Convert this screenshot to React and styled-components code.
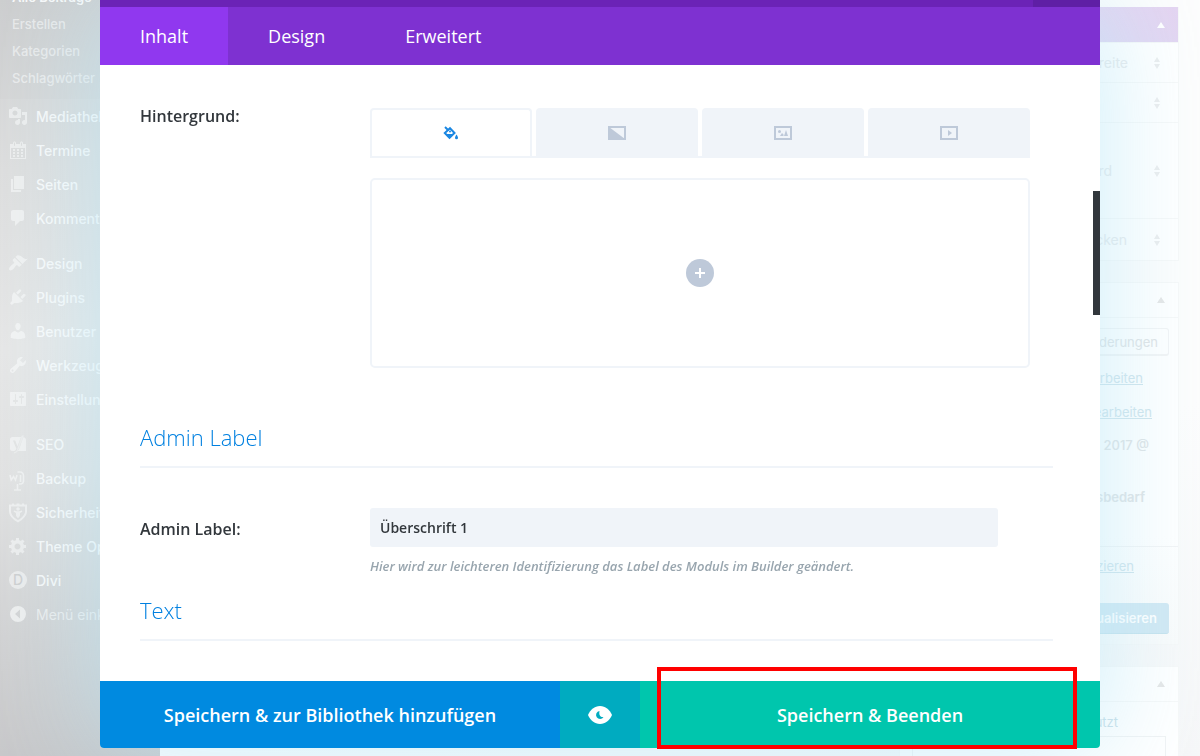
import React from "react";
import styled, { createGlobalStyle, css } from "styled-components";

const ui = `Inter, "Liberation Sans", sans-serif`;
const brand = `"Open Sans", "Noto Sans", sans-serif`;

const GlobalStyle = createGlobalStyle`
  *, *::before, *::after { box-sizing: border-box; }
  body { margin: 0; background: #fdfdfd; overflow: hidden; }
  button, input { font: inherit; color: inherit; border: 0; margin: 0; padding: 0; background: none; }
  button { cursor: pointer; }
  a { color: inherit; text-decoration: none; }
  h2 { margin: 0; font: inherit; }
`;

/* ---------- admin page behind the dialog ---------- */

const Page = styled.div`
  display: flex;
  justify-content: space-between;
  height: 100vh;
  overflow: hidden;
  font-family: ${ui};
  font-size: 14px;
  background: linear-gradient(160deg, #fdfdfd 70%, #f6f7f8);
`;

const Sidebar = styled.nav`
  width: 160px;
  flex: none;
  color: rgba(255, 255, 255, 0.85);
  background: linear-gradient(172deg, #d0d1d2 0%, #dedede 22%, #e7e7e7 45%, #e2e2e2 62%, #d2d2d3 82%, #c6c6c8 100%);
`;

const SubMenu = styled.div`
  margin-top: -16px;
  padding-bottom: 7px;
  background: rgba(0, 0, 0, 0.01);
`;

const SubLink = styled.a`
  display: block;
  padding-left: 12px;
  font-size: 13px;
  font-weight: ${(p) => (p.$current ? 600 : 500)};
  line-height: 27px;
  color: ${(p) => (p.$current ? "rgba(255,255,255,.9)" : "rgba(255,255,255,.55)")};
`;

const MenuGroup = styled.div`
  margin-bottom: 11px;
`;

const MenuLink = styled.a`
  display: flex;
  align-items: center;
  gap: 8px;
  height: 34px;
  padding-left: 8px;
  font-weight: ${(p) => (p.$muted ? 400 : 500)};
  white-space: nowrap;
  opacity: ${(p) => (p.$muted ? 0.7 : 1)};

  svg {
    flex: none;
    opacity: ${(p) => (p.$muted ? 1 : 0.6)};
  }
`;

const Aside = styled.aside`
  display: flex;
  flex-direction: column;
  gap: 21px;
  width: 280px;
  flex: none;
  margin: 7px 21px 0 0;
  color: #e0e3e5;
`;

const Panel = styled.section`
  flex: none;
  border: 1px solid #f7f8f8;
  border-top-width: ${(p) => (p.$flush ? 0 : "1px")};
  background: ${(p) => (p.$shaded ? "linear-gradient(#fff 70%, #fafbfb)" : "#fff")};
`;

const PanelHead = styled.header`
  display: flex;
  align-items: center;
  justify-content: flex-end;
  height: ${(p) => (p.$accent ? 36 : 35)}px;
  padding-right: 12px;
  border-bottom: 1px solid #f7f8f8;
  color: ${(p) => (p.$accent ? "#fff" : "#e6e6e6")};
  background: ${(p) => (p.$accent ? "linear-gradient(20deg, #dcdaf4, #e5d4f1)" : "none")};
`;

const Setting = styled.div`
  display: flex;
  align-items: center;
  justify-content: space-between;
  height: ${(p) => p.$height}px;
  padding: 0 17px;
  border-bottom: 1px solid #f7f8f8;
  color: #e8eaec;

  &:last-child { border-bottom: 0; }
`;

const SettingValue = styled.span`
  flex: 1;
  padding-right: ${(p) => p.$gap}px;
  text-align: right;
`;

const Meta = styled.div`
  display: flex;
  flex-direction: column;
  align-items: flex-end;
  padding: 10px 9px 0;
  height: 228px;
  font-size: 13px;
`;

const MetaLine = styled.div`
  margin-top: ${(p) => p.$space}px;
  padding-right: ${(p) => p.$gap}px;
  line-height: 20px;
  font-weight: ${(p) => (p.$bold ? 600 : 500)};
`;

const MetaLink = styled.a`
  color: #d0e4ec;
  font-weight: 400;
  text-decoration: underline;
`;

const PreviewButton = styled.button`
  height: 28px;
  padding: 0 10px;
  border: 1px solid #f3f4f5;
  border-bottom-width: 2px;
  border-radius: 3px;
`;

const PublishBar = styled.footer`
  display: flex;
  flex-direction: column;
  align-items: flex-end;
  gap: 27px;
  height: 98px;
  padding: 9px 9px 0;
  border-top: 1px solid #f3f4f5;
  font-size: 13px;
`;

const PublishButton = styled.button`
  height: 31px;
  padding: 0 12px;
  border-radius: 3px;
  border-bottom: 1px solid #c5e2ed;
  font-weight: 600;
  color: #fff;
  background: #d1e8f3;
`;

const Used = styled.div`
  padding: 10px 12px 0;
  font-size: 13px;
  line-height: 20px;
  text-align: right;
  color: #c9dfe9;
`;

const UsedLabel = styled.a`
  margin-right: 48px;
`;

const UsedBox = styled.div`
  height: 60px;
  margin-top: 4px;
  border: 1px solid #f1f3f4;
`;

/* ---------- module settings dialog ---------- */

const Dialog = styled.div`
  position: fixed;
  inset: 0 100px 8px;
  display: flex;
  flex-direction: column;
  border-radius: 0 0 4px 4px;
  background: #fff;
  box-shadow: 0 0 110px rgba(183, 230, 247, 0.72);
  font-family: ${brand};
  color: #32373c;
`;

const TitleBar = styled.div`
  display: flex;
  justify-content: flex-end;
  flex: none;
  height: 7px;
  background: #6b23b6;
`;

const TitleAction = styled.button`
  width: 67px;
  background: #5f1fa5;
`;

const TabBar = styled.div`
  display: flex;
  flex: none;
  background: #7e31d1;
`;

const Tab = styled.button`
  height: 58px;
  padding: 0 40px;
  font-size: 18px;
  font-weight: 500;
  color: #fff;
  background: ${(p) => (p.$active ? "#9038ef" : "none")};
`;

const Body = styled.div`
  position: relative;
  flex: 1;
  min-height: 0;
  overflow: hidden;
  padding: 43px 47px 0 40px;
`;

const ScrollThumb = styled.div`
  position: absolute;
  top: 126px;
  right: 0;
  width: 7px;
  height: 124px;
  background: #32373c;
`;

const Field = styled.div`
  display: grid;
  grid-template-columns: 230px 1fr;
`;

const label = css`
  font-size: 16px;
  font-weight: 600;
  line-height: 16px;
`;

const FieldTitle = styled.div`
  ${label}
`;

const FieldLabel = styled.label`
  ${label}
  padding-top: 13px;
`;

const BackgroundPicker = styled.div`
  padding-right: 23px;
`;

const KindTabs = styled.div`
  display: flex;
  gap: 4px;
  height: 50px;
  border-bottom: 2px solid #f0f4f9;
`;

const KindTab = styled.button`
  flex: 1;
  display: flex;
  align-items: center;
  justify-content: center;
  border-radius: 4px 4px 0 0;
  color: ${(p) => (p.$active ? "#1b87e2" : "#bec9d9")};
  background: ${(p) => (p.$active ? "#fff" : "#f0f4f9")};
  border: 2px solid #f0f4f9;
  border-bottom: 0;
`;

const ColorArea = styled.div`
  display: flex;
  align-items: center;
  justify-content: center;
  height: 190px;
  margin-top: 20px;
  border: 2px solid #f0f4f9;
  border-radius: 5px;
`;

const AddButton = styled.button`
  display: flex;
  align-items: center;
  justify-content: center;
  width: 28px;
  height: 28px;
  border-radius: 50%;
  color: #fff;
  background: #bec9d9;
`;

const SectionTitle = styled.h2`
  margin-top: ${(p) => p.$space}px;
  padding-bottom: 14px;
  border-bottom: 2px solid #f0f4f9;
  font-size: 22px;
  font-weight: 300;
  line-height: 30px;
  color: #0080e0;
`;

const LabelField = styled(Field)`
  margin-top: 40px;
`;

const TextInput = styled.input`
  display: block;
  width: calc(100% - 55px);
  height: 39px;
  padding: 0 10px;
  border-radius: 3px;
  font-size: 14px;
  font-weight: 600;
  background: #f0f4f9;
  outline: 0;
`;

const Help = styled.p`
  margin: 9px 0 0;
  font-size: 13px;
  font-style: italic;
  font-weight: 600;
  line-height: 20px;
  color: #98a5ae;
`;

const Footer = styled.div`
  display: flex;
  flex: none;
  height: 67px;
`;

const FooterButton = styled.button`
  position: relative;
  display: flex;
  align-items: center;
  justify-content: center;
  flex: ${(p) => (p.$icon ? "0 0 80px" : "1")};
  font-size: 18px;
  font-weight: 600;
  color: #fff;
  background: ${(p) => p.$color};
  border-radius: ${(p) => p.$radius || 0};
`;

const Highlight = styled.span`
  position: absolute;
  inset: -14px 23px -1px 17px;
  border: 4px solid #ff0000;
  pointer-events: none;
`;

/* ---------- icons ---------- */

const glyphs = {
  media: "M13 11V4c0-.55-.45-1-1-1h-1.67L9 1H5L3.67 3H2c-.55 0-1 .45-1 1v7c0 .55.45 1 1 1h10c.55 0 1-.45 1-1zM7 4.5c1.38 0 2.5 1.12 2.5 2.5S8.38 9.5 7 9.5 4.5 8.38 4.5 7 5.62 4.5 7 4.5zM14 6h5v10.5c0 1.38-1.12 2.5-2.5 2.5S14 17.88 14 16.5s1.12-2.5 2.5-2.5c.17 0 .34.02.5.05V9h-3V6zm-4 8.05V13h2v3.5c0 1.38-1.12 2.5-2.5 2.5S7 17.88 7 16.5 8.12 14 9.5 14c.17 0 .34.02.5.05z",
  calendar: "M15 4h3v15H2V4h3V3c0-.41.15-.76.44-1.06.29-.29.65-.44 1.06-.44s.77.15 1.06.44c.29.3.44.65.44 1.06v1h4V3c0-.41.15-.76.44-1.06.29-.29.65-.44 1.06-.44s.77.15 1.06.44c.29.3.44.65.44 1.06v1zM6 3v2.5c0 .14.05.26.15.36.09.09.21.14.35.14s.26-.05.35-.14c.1-.1.15-.22.15-.36V3c0-.14-.05-.26-.15-.35-.09-.1-.21-.15-.35-.15s-.26.05-.35.15c-.1.09-.15.21-.15.35zm7 0v2.5c0 .14.05.26.14.36.1.09.22.14.36.14s.26-.05.36-.14c.09-.1.14-.22.14-.36V3c0-.14-.05-.26-.14-.35-.1-.1-.22-.15-.36-.15s-.26.05-.36.15c-.09.09-.14.21-.14.35zm4 15V8H3v10h14zM7 9v2H5V9h2zm2 0h2v2H9V9zm4 2V9h2v2h-2zm-6 1v2H5v-2h2zm2 0h2v2H9v-2zm4 2v-2h2v2h-2zm-6 1v2H5v-2h2zm4 2H9v-2h2v2zm4 0h-2v-2h2v2z",
  pages: "M6 15V2h10v13H6zm-1 1h8v2H3V5h2v11z",
  comments: "M5 2h9c1.1 0 2 .9 2 2v7c0 1.1-.9 2-2 2h-2l-5 5v-5H5c-1.1 0-2-.9-2-2V4c0-1.1.9-2 2-2z",
  design: "M14.48 11.06L7.41 3.99l1.5-1.5c.5-.56 2.3-.47 3.51.32 1.21.8 1.43 1.28 2.91 2.1 1.18.64 2.45 1.26 4.45.85zm-.71.71L6.7 4.7 4.93 6.47c-.39.39-.39 1.02 0 1.41l1.06 1.06c.39.39.39 1.03 0 1.42-.6.6-1.43 1.11-2.21 1.69-.35.26-.7.53-1.01.84C1.43 14.23.4 16.08 1.4 17.07c.99 1 2.84-.03 4.18-1.36.31-.31.58-.66.85-1.02.57-.78 1.08-1.61 1.69-2.21.39-.39 1.02-.39 1.41 0l1.06 1.06c.39.39 1.02.39 1.41 0z",
  plugins: "M13.11 4.36L9.87 7.6 8 5.73l3.24-3.24c.35-.34 1.05-.2 1.56.32.52.51.66 1.21.31 1.55zm-8 1.77l.91-1.12 9.01 9.01-1.19.84c-.71.71-2.63 1.16-3.82 1.16H6.14L4.9 17.26c-.59.59-1.54.59-2.12 0-.59-.58-.59-1.53 0-2.12l1.24-1.24v-3.88c0-1.13.4-3.19 1.09-3.89zm7.26 3.97l3.24-3.24c.34-.35 1.04-.21 1.55.31.52.51.66 1.21.31 1.55l-3.24 3.25z",
  users: "M10 9.25c-2.27 0-2.73-3.44-2.73-3.44C7 4.02 7.82 2 9.97 2c2.16 0 2.98 2.02 2.71 3.81 0 0-.41 3.44-2.68 3.44zm0 2.57L12.72 10c2.39 0 4.52 2.33 4.52 4.53v2.49s-3.65 1.13-7.24 1.13c-3.65 0-7.24-1.13-7.24-1.13v-2.49c0-2.25 1.94-4.48 4.47-4.48z",
  tools: "M16.68 9.77c-1.34 1.34-3.3 1.67-4.95.99l-5.41 6.52c-.99.99-2.59.99-3.58 0s-.99-2.59 0-3.57l6.52-5.42c-.68-1.65-.35-3.61.99-4.95 1.28-1.28 3.12-1.62 4.72-1.06l-2.89 2.89 2.82 2.82 2.86-2.87c.53 1.58.18 3.39-1.08 4.65zM3.81 16.21c.4.39 1.04.39 1.43 0 .4-.4.4-1.04 0-1.43-.39-.4-1.03-.4-1.43 0-.39.39-.39 1.03 0 1.43z",
  settings: "M18 16V4c0-.55-.45-1-1-1H3c-.55 0-1 .45-1 1v12c0 .55.45 1 1 1h14c.55 0 1-.45 1-1zM8 11h1c.55 0 1 .45 1 1s-.45 1-1 1H8v1.5c0 .28-.22.5-.5.5s-.5-.22-.5-.5V13H6c-.55 0-1-.45-1-1s.45-1 1-1h1V5.5c0-.28.22-.5.5-.5s.5.22.5.5V11zm5-2h-1c-.55 0-1-.45-1-1s.45-1 1-1h1V5.5c0-.28.22-.5.5-.5s.5.22.5.5V7h1c.55 0 1 .45 1 1s-.45 1-1 1h-1v5.5c0 .28-.22.5-.5.5s-.5-.22-.5-.5V9z",
  gear: "M18 12h-2.18c-.17.7-.44 1.35-.81 1.93l1.54 1.54-2.1 2.1-1.54-1.54c-.58.36-1.23.63-1.91.79V19H8v-2.18c-.68-.16-1.33-.43-1.91-.79l-1.54 1.54-2.12-2.12 1.54-1.54c-.36-.58-.63-1.23-.79-1.91H1V9.03h2.17c.16-.7.44-1.35.8-1.94L2.43 5.55l2.1-2.1 1.54 1.54c.58-.37 1.24-.64 1.93-.81V2h3v2.18c.68.16 1.33.43 1.91.79l1.54-1.54 2.12 2.12-1.54 1.54c.36.59.64 1.24.8 1.94H18V12zm-8.5 1.5c1.66 0 3-1.34 3-3s-1.34-3-3-3-3 1.34-3 3 1.34 3 3 3z",
  collapse: "M10 2a8 8 0 1 0 0 16 8 8 0 0 0 0-16zM7 10l5-4.5v9z",
};

const drawings = {
  seo: (
    <>
      <path d="M4.500 3H13l-3.600 9.500L7.200 6.500H5l3.400 8.200c-.5 1.300-1.200 2-2.400 2.300H4.500A2.500 2.500 0 0 1 2 14.500v-9A2.500 2.500 0 0 1 4.500 3z" />
      <path d="M15.300 3.200C17 3.500 18 4.500 18 6v11H9.800c.7-.8 1.200-1.700 1.600-2.800z" />
      <path d="M13.800 1.500h2l-5.300 14c-.8 2.200-2 3.700-4.600 3.900v-1.200c1.800-.2 2.600-1.200 3.200-3z" opacity=".7" />
    </>
  ),
  backup: (
    <g fill="none" stroke="currentColor" strokeWidth="2">
      <path d="M2 7l1.200 5L5.500 8.500 7.500 12 9 7" strokeWidth="1.600" />
      <path d="M9.500 4H12a3.500 3.500 0 0 1 3.500 3.500V13a3 3 0 0 1-3 3H11" strokeWidth="1.600" />
      <path d="M12.500 7v7M9.500 16v6M6 22h7" strokeWidth="1.600" />
    </g>
  ),
  shield: (
    <>
      <path d="M1 2.500h3v-1h2v1h2.500v-1h3v1H14v-1h2v1h3V9c0 5-4 8.500-9 11.500C5 17.500 1 14 1 9zM3 4.500V9c0 4 3 6.600 7 9.100 4-2.500 7-5.100 7-9.100V4.500z" fillRule="evenodd" />
      <circle cx="10" cy="7" r="1.800" />
      <path d="M6 8.500l3 .8h2l3-.8.300 1.200-2.300 1.300v2.500l-1.300 2.300H9.300L8 13.500V11L5.700 9.700z" />
    </>
  ),
  divi: (
    <>
      <circle cx="10" cy="10" r="9" />
      <text x="10" y="15" textAnchor="middle" fontFamily="Inter, sans-serif" fontSize="14" fontWeight="500" fill="#c9cacc">D</text>
    </>
  ),
};

const MenuIcon = ({ name }) => (
  <svg width="20" height="20" viewBox="0 0 20 20" fill="currentColor" overflow="visible" aria-hidden="true">
    {drawings[name] || <path d={glyphs[name]} fillRule={name === "collapse" ? "evenodd" : "nonzero"} />}
  </svg>
);

const Caret = () => (
  <svg width="10" height="8" viewBox="0 0 10 8" fill="currentColor" aria-hidden="true">
    <path d="M5 1l4 6H1z" />
  </svg>
);

const Sorter = () => (
  <svg width="8" height="14" viewBox="0 0 8 14" fill="#ecedee" aria-hidden="true">
    <path d="M4 1l3 5H1zM4 13l3-5H1z" />
  </svg>
);

const FillIcon = () => (
  <svg width="16" height="14" viewBox="0 0 16 14" aria-hidden="true">
    <path d="M2 1l3.500 3.500" stroke="currentColor" strokeWidth="2" />
    <path d="M7 2.200L11.500 7 6.500 11.800 1.800 7z" fill="none" stroke="currentColor" strokeWidth="2" />
    <path d="M2 8h9L6.500 12z" fill="currentColor" />
    <circle cx="7" cy="5.600" r="1" fill="currentColor" />
    <path d="M13.500 8.500c1 1.600 1.500 2.400 1.500 3.300a1.500 1.500 0 0 1-3 0c0-.9.500-1.700 1.500-3.300z" fill="currentColor" />
  </svg>
);

const Frame = ({ children }) => (
  <svg width="18" height="14" viewBox="0 0 18 14" fill="currentColor" aria-hidden="true">
    <rect x="1" y="1" width="16" height="12" fill="none" stroke="currentColor" strokeWidth="2" />
    {children}
  </svg>
);

const EyeIcon = () => (
  <svg width="24" height="18" viewBox="0 0 24 18" aria-hidden="true">
    <path d="M12 0c5.500 0 9.500 3.500 12 9-2.500 5.500-6.500 9-12 9S2.500 14.500 0 9C2.500 3.500 6.500 0 12 0z" fill="#fff" />
    <path d="M11.500 5a4 4 0 1 0 4 6c-2.500.6-5-1.500-4-6z" fill="#00abc0" />
  </svg>
);

/* ---------- data ---------- */

const menu = [
  [["media", "Mediathek"], ["calendar", "Termine"], ["pages", "Seiten"], ["comments", "Kommentare"]],
  [["design", "Design"], ["plugins", "Plugins"], ["users", "Benutzer"], ["tools", "Werkzeuge"], ["settings", "Einstellungen"]],
  [["seo", "SEO"], ["backup", "Backup"], ["shield", "Sicherheit"], ["gear", "Theme Optionen"], ["divi", "Divi"], ["collapse", "Menü einklappen"]],
];

const kinds = [
  ["Farbe", <FillIcon />],
  ["Verlauf", <Frame><path d="M1 1l16 12H1z" /></Frame>],
  ["Bild", <Frame><circle cx="5.500" cy="5.500" r="1.500" /><path d="M6 10l2-3 1.500 1.500V10zM10 10l2-6 2 6z" /></Frame>],
  ["Video", <Frame><path d="M8 4l4 3-4 3z" /></Frame>],
];

export default function App() {
  return (
    <>
      <GlobalStyle />
      <Page>
        <Sidebar>
          <SubMenu>
            <SubLink href="#" $current>Alle Beiträge</SubLink>
            <SubLink href="#">Erstellen</SubLink>
            <SubLink href="#">Kategorien</SubLink>
            <SubLink href="#">Schlagwörter</SubLink>
          </SubMenu>
          {menu.map((group, i) => (
            <MenuGroup key={i}>
              {group.map(([icon, text]) => (
                <MenuLink href="#" key={text} $muted={icon === "collapse"}>
                  <MenuIcon name={icon} />
                  {text}
                </MenuLink>
              ))}
            </MenuGroup>
          ))}
        </Sidebar>

        <Aside>
          <Panel $flush>
            <PanelHead $accent><Caret /></PanelHead>
            <Setting $height={40}><SettingValue $gap={25}>Breite</SettingValue><Sorter /></Setting>
            <Setting $height={40}><SettingValue $gap={25} /><Sorter /></Setting>
            <Setting $height={96}><SettingValue $gap={41}>Standard</SettingValue><Sorter /></Setting>
            <Setting $height={41}><SettingValue $gap={26}>Verstecken</SettingValue><Sorter /></Setting>
          </Panel>

          <Panel $shaded>
            <PanelHead><Caret /></PanelHead>
            <Meta>
              <PreviewButton>Änderungen</PreviewButton>
              <MetaLine $space={12} $gap={26}><MetaLink href="#">Bearbeiten</MetaLink></MetaLine>
              <MetaLine $space={14} $gap={17}><MetaLink href="#">Bearbeiten</MetaLink></MetaLine>
              <MetaLine $space={13} $gap={20}>2017 @</MetaLine>
              <MetaLine $space={32} $gap={24} $bold>sbedarf</MetaLine>
            </Meta>
            <PublishBar>
              <MetaLine $space={0} $gap={35}><MetaLink href="#">Duplizieren</MetaLink></MetaLine>
              <PublishButton>Aktualisieren</PublishButton>
            </PublishBar>
          </Panel>

          <Panel>
            <PanelHead><Caret /></PanelHead>
            <Used>
              <UsedLabel href="#">Benutzt</UsedLabel>
              <UsedBox />
            </Used>
          </Panel>
        </Aside>
      </Page>

      <Dialog role="dialog" aria-label="Moduleinstellungen">
        <TitleBar><TitleAction aria-label="Schließen" /></TitleBar>
        <TabBar role="tablist">
          <Tab role="tab" aria-selected="true" $active>Inhalt</Tab>
          <Tab role="tab">Design</Tab>
          <Tab role="tab">Erweitert</Tab>
        </TabBar>

        <Body>
          <Field>
            <FieldTitle>Hintergrund:</FieldTitle>
            <BackgroundPicker>
              <KindTabs>
                {kinds.map(([name, icon], i) => (
                  <KindTab key={name} aria-label={name} $active={i === 0}>{icon}</KindTab>
                ))}
              </KindTabs>
              <ColorArea>
                <AddButton aria-label="Hinzufügen">
                  <svg width="10" height="10" viewBox="0 0 10 10" stroke="currentColor" strokeWidth="2" aria-hidden="true">
                    <path d="M5 0v10M0 5h10" />
                  </svg>
                </AddButton>
              </ColorArea>
            </BackgroundPicker>
          </Field>

          <SectionTitle $space={54}>Admin Label</SectionTitle>
          <LabelField>
            <FieldLabel htmlFor="admin-label">Admin Label:</FieldLabel>
            <div>
              <TextInput id="admin-label" defaultValue="Überschrift 1" />
              <Help>Hier wird zur leichteren Identifizierung das Label des Moduls im Builder geändert.</Help>
            </div>
          </LabelField>
          <SectionTitle $space={19}>Text</SectionTitle>
          <ScrollThumb />
        </Body>

        <Footer>
          <FooterButton $color="#008ae0" $radius="0 0 0 4px">Speichern &amp; zur Bibliothek hinzufügen</FooterButton>
          <FooterButton $icon $color="#00abc0" aria-label="Vorschau"><EyeIcon /></FooterButton>
          <FooterButton $color="#00c6ad" $radius="0 0 4px 0">
            Speichern &amp; Beenden
            <Highlight />
          </FooterButton>
        </Footer>
      </Dialog>
    </>
  );
}
